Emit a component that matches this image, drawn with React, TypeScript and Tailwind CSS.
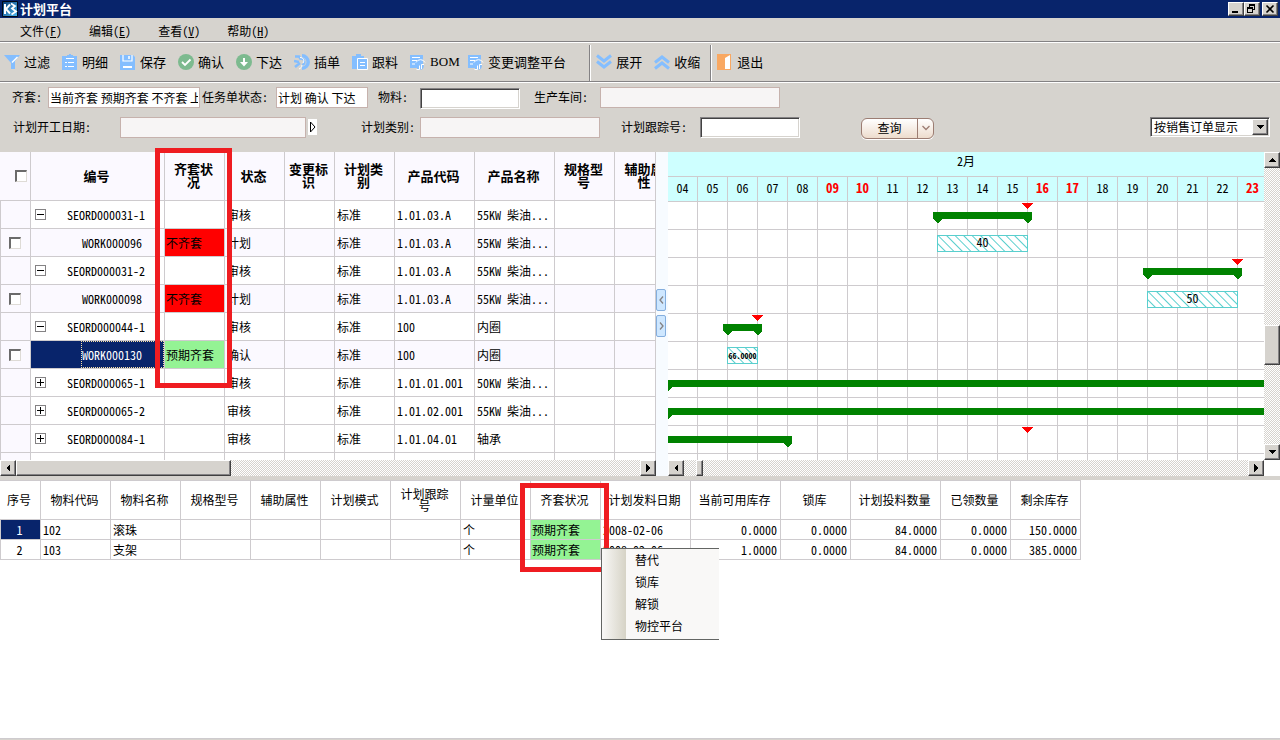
import React from "react";

const RAISED =
  "border border-t-white border-l-white border-r-[#404040] border-b-[#404040] bg-[#d6d3ce] shadow-[inset_-1px_-1px_0_#848284]";
const SUNKEN =
  "border border-t-[#848284] border-l-[#848284] border-r-white border-b-white shadow-[inset_1px_1px_0_#424142,inset_-1px_-1px_0_#d6d3ce]";
const DITHER =
  "bg-[repeating-conic-gradient(#d6d3ce_0_25%,#ffffff_0_50%)] bg-[length:2px_2px]";

/* ---------- icons ---------- */

function Logo() {
  return (
    <svg width="16" height="16" viewBox="0 0 16 16" aria-hidden="true">
      <defs>
        <linearGradient id="logo" x1="0" y1="0" x2="1" y2="1">
          <stop offset="0" stopColor="#0a3c78" />
          <stop offset="1" stopColor="#4db8f0" />
        </linearGradient>
      </defs>
      <rect width="16" height="16" rx="1" fill="#020a18" />
      <rect x="1" y="1" width="14" height="14" fill="url(#logo)" />
      <path d="M3 3v10M8 3.500 4 8l4 4.500" stroke="#fff" strokeWidth="2" fill="none" />
      <path d="M9 2.500 13 5l-3 2.500L14 10.500l-4.500 3" stroke="#fff" strokeWidth="1.800" fill="none" />
    </svg>
  );
}

const BLUE = "#84beff";
const GREEN = "#7dba8f";

function Icon({ name }: { name: string }) {
  return (
    <svg width="16" height="16" viewBox="0 0 16 16" className="shrink-0" aria-hidden="true">
      {name === "filter" && (
        <>
          <path d="M0 1h16l-5 6v8H7V9z" fill={BLUE} />
          <path d="M8 8.500 13.500 3" stroke="#fff" strokeWidth="1.500" />
        </>
      )}
      {name === "detail" && (
        <>
          <path d="M0 2h5V1h2V0h2v1h2v1h4v14H0z" fill={BLUE} />
          <path d="M4 4.500h8M3 8.500h2M6 8.500h6M3 12.500h2M6 12.500h6" stroke="#fff" strokeWidth="1.200" />
        </>
      )}
      {name === "save" && (
        <>
          <path d="M0 1h13l2 2v13H0z" fill={BLUE} />
          <path d="M3 1v6h9V1" fill="none" stroke="#fff" strokeWidth="1.200" />
          <path d="M9 2v3" stroke="#fff" strokeWidth="1.500" />
          <path d="M3 13h9" stroke="#fff" strokeWidth="2" />
        </>
      )}
      {name === "confirm" && (
        <>
          <circle cx="8" cy="8" r="8" fill={GREEN} />
          <path d="m4 8 3 3 5.500-5.500" fill="none" stroke="#fff" strokeWidth="1.800" />
        </>
      )}
      {name === "release" && (
        <>
          <circle cx="8" cy="8" r="8" fill={GREEN} />
          <path d="M8 4v6" stroke="#fff" strokeWidth="2" />
          <path d="M4 8h8l-4 4.500z" fill="#fff" />
        </>
      )}
      {name === "insert" && (
        <>
          <path d="M8 1.800a6.200 6.200 0 0 1 0 12.400" fill="none" stroke={BLUE} strokeWidth="3.500" />
          <path d="M7 5a3 3 0 0 1 1 6" fill="none" stroke={BLUE} strokeWidth="2" />
          <path d="M1 2.500h4l2 3M0 7l5 1M1 13l5-4" fill="none" stroke={BLUE} strokeWidth="2.500" />
          <path d="M6 3.500c3 0 5 2.500 3 5.500M5 15c2-1 3-2 3-4" stroke="#fff" fill="none" />
        </>
      )}
      {name === "follow" && (
        <>
          <path d="M0 2h4V0h5v2h3v13H0z" fill={BLUE} />
          <path d="M5.500 4.500h10v11h-10z" fill={BLUE} stroke="#fff" />
          <path d="M8 8.500h5M8 11.500h5" stroke="#fff" strokeWidth="1.200" />
        </>
      )}
      {name === "bom" && (
        <>
          <path d="M0 1h13v13H0z" fill={BLUE} />
          <path d="M2 3.500h8M2 6.500h5M2 10h3" stroke="#fff" strokeWidth="1.200" />
          <path d="M7 8.500a4 4 0 1 1 5 7h-5z" fill={BLUE} />
          <path d="M6 8.500a5 5 0 0 1 9 0M11.500 15v-4.500H14M6.500 15.500h3v-4" fill="none" stroke="#fff" />
        </>
      )}
      {name === "expand" && (
        <path d="m1 1.500 7 5.500 7-5.500M1 7.500l7 5.500 7-5.500" fill="none" stroke={BLUE} strokeWidth="3" />
      )}
      {name === "collapse" && (
        <path d="m1 8.500 7-5.500 7 5.500M1 14.500 8 9l7 5.500" fill="none" stroke={BLUE} strokeWidth="3" />
      )}
      {name === "exit" && (
        <>
          <path d="M0 0h14v16H0z" fill="#f9a862" />
          <path d="m8 4 5-3v14H8z" fill="#fff" />
        </>
      )}
    </svg>
  );
}

function Arrow({ dir }: { dir: "up" | "down" | "left" | "right" }) {
  const d = {
    up: "M0 6h8L4 2z",
    down: "M0 2h8L4 6z",
    left: "M6 0v8L2 4z",
    right: "M2 0v8l4-4z",
  }[dir];
  return (
    <svg width="8" height="8" viewBox="0 0 8 8" shapeRendering="crispEdges" aria-hidden="true">
      <path d={d} fill="#000" />
    </svg>
  );
}

function ScrollButton({ dir, label }: { dir: "up" | "down" | "left" | "right"; label: string }) {
  return (
    <button aria-label={label} className={`flex size-4 shrink-0 items-center justify-center ${RAISED}`}>
      <Arrow dir={dir} />
    </button>
  );
}

/* ---------- top bars ---------- */

function TitleBar() {
  return (
    <header className="flex h-[18px] items-center bg-[#08246b] pr-0.5 pl-0.5 text-white">
      <Logo />
      <h1 className="ml-0.5 text-[13px] leading-4 font-bold">计划平台</h1>
      <div className="ml-auto flex">
        <button aria-label="最小化" className={`h-[14px] w-4 ${RAISED}`}>
          <svg width="14" height="12" viewBox="0 0 14 12" shapeRendering="crispEdges">
            <path d="M3 8h6v2H3z" />
          </svg>
        </button>
        <button aria-label="还原" className={`h-[14px] w-4 ${RAISED}`}>
          <svg width="14" height="12" viewBox="0 0 14 12" shapeRendering="crispEdges">
            <path d="M4 1h6v6H8V6h1V3H5v1H4zM2 4h6v6H2zM3 6v3h4V6z" fillRule="evenodd" />
          </svg>
        </button>
        <button aria-label="关闭" className={`ml-0.5 h-[14px] w-4 ${RAISED}`}>
          <svg width="14" height="12" viewBox="0 0 14 12">
            <path d="m3.500 2.500 7 7m0-7-7 7" stroke="#000" strokeWidth="1.600" />
          </svg>
        </button>
      </div>
    </header>
  );
}

function MenuBar() {
  const menus = [
    ["文件", "F"],
    ["编辑", "E"],
    ["查看", "V"],
    ["帮助", "H"],
  ];
  return (
    <nav className="flex h-[25px] items-center gap-[27px] border-b border-b-white pt-0.5 pl-5 shadow-[inset_0_-1px_0_#848284]">
      {menus.map(([text, key]) => (
        <button key={key} className="leading-4">
          {text}(<u>{key}</u>)
        </button>
      ))}
    </nav>
  );
}

function Tool({ icon, text }: { icon: string; text: string }) {
  return (
    <button className="flex min-w-[46px] items-center gap-1 text-[13px] leading-4 whitespace-nowrap">
      <Icon name={icon} />
      {text === "BOM" ? <span className="w-[26px] font-['Liberation_Serif',serif]">{text}</span> : text}
    </button>
  );
}

function Divider() {
  return <span className="mt-0.5 h-9 w-0.5 self-start border-l border-l-[#848284] bg-white" />;
}

function ToolBar() {
  return (
    <div className="flex h-10 items-center border-b border-b-white pb-0.5 shadow-[inset_0_-1px_0_#848284]">
      <div className="flex gap-3 pr-[23px] pl-1">
        <Tool icon="filter" text="过滤" />
        <Tool icon="detail" text="明细" />
        <Tool icon="save" text="保存" />
        <Tool icon="confirm" text="确认" />
        <Tool icon="release" text="下达" />
        <Tool icon="insert" text="插单" />
        <Tool icon="follow" text="跟料" />
        <Tool icon="bom" text="BOM" />
        <Tool icon="bom" text="变更调整平台" />
      </div>
      <Divider />
      <div className="flex gap-3 pr-[10px] pl-[5px]">
        <Tool icon="expand" text="展开" />
        <Tool icon="collapse" text="收缩" />
      </div>
      <Divider />
      <div className="pl-[5px]">
        <Tool icon="exit" text="退出" />
      </div>
    </div>
  );
}

/* ---------- filters ---------- */

const FLAT = "h-[21px] border border-[#c6b2ad] px-px font-['Noto_Sans_CJK_SC',sans-serif] outline-none";

function Filters() {
  return (
    <form className="flex h-[69px] flex-col gap-2 pt-[3px]" onSubmit={(e) => e.preventDefault()}>
      <div className="flex h-[22px] items-center">
        <label htmlFor="kit" className="w-12 pl-3">齐套:</label>
        <input id="kit" className={`w-[152px] bg-white ${FLAT}`} defaultValue="当前齐套 预期齐套 不齐套 上" />
        <label htmlFor="state" className="w-[76px] pl-0.5">任务单状态:</label>
        <input id="state" className={`w-[92px] bg-white ${FLAT}`} defaultValue="计划 确认 下达" />
        <label htmlFor="material" className="w-[52px] pl-[10px]">物料:</label>
        <input id="material" className={`mt-[3px] h-[21px] w-[100px] bg-white px-1 ${SUNKEN}`} />
        <label htmlFor="shop" className="w-20 pl-[14px]">生产车间:</label>
        <input id="shop" className={`w-[180px] bg-[#f7f5f5] ${FLAT}`} />
      </div>
      <div className="flex h-[22px] items-center">
        <label htmlFor="start" className="w-[120px] pl-[13px]">计划开工日期:</label>
        <input id="start" className={`w-[186px] bg-[#f7f5f5] ${FLAT}`} />
        <button aria-label="选择日期" className="ml-0.5 flex h-4 w-[9px] items-center justify-center bg-white">
          <svg width="7" height="12" viewBox="0 0 7 12">
            <path d="M1.500 1v10L6 6z" fill="none" stroke="#000" />
          </svg>
        </button>
        <label htmlFor="kind" className="w-[103px] pl-11">计划类别:</label>
        <input id="kind" className={`w-[180px] bg-[#f7f5f5] ${FLAT}`} />
        <label htmlFor="track" className="w-[100px] pl-[21px]">计划跟踪号:</label>
        <input id="track" className={`h-[21px] w-[100px] bg-white px-1 ${SUNKEN}`} />
        <div className="mt-0.5 ml-[61px] flex h-[21px] w-[73px] overflow-hidden rounded-md border border-[#9c7d73] bg-linear-to-b from-white to-[#eddccd] shadow-[0_1px_0_#ffffff]">
          <button className="flex-1">查询</button>
          <button aria-label="更多查询" className="flex w-4 items-center justify-center border-l border-[#9c7d73]">
            <svg width="8" height="6" viewBox="0 0 8 6">
              <path d="m.500 1 3.500 3.500L7.500 1" fill="none" stroke="#9c7d73" strokeWidth="1.300" />
            </svg>
          </button>
        </div>
        <div className={`relative mr-[10px] ml-auto h-5 w-[120px] bg-white ${SUNKEN}`}>
          <select aria-label="显示方式" className="h-full w-full appearance-none pl-[3px] leading-4 outline-none">
            <option>按销售订单显示</option>
          </select>
          <span className={`pointer-events-none absolute top-px right-px flex size-4 items-center justify-center ${RAISED}`}>
            <Arrow dir="down" />
          </span>
        </div>
      </div>
    </form>
  );
}

/* ---------- order table ---------- */

type Order = {
  id: string;
  mark?: "-" | "+";
  kit?: string;
  state: string;
  code: string;
  product: string;
  selected?: boolean;
};

const ORDERS: Order[] = [
  { id: "SEORD000031-1", mark: "-", state: "审核", code: "1.01.03.A", product: "55KW 柴油..." },
  { id: "WORK000096", kit: "不齐套", state: "计划", code: "1.01.03.A", product: "55KW 柴油..." },
  { id: "SEORD000031-2", mark: "-", state: "审核", code: "1.01.03.A", product: "55KW 柴油..." },
  { id: "WORK000098", kit: "不齐套", state: "计划", code: "1.01.03.A", product: "55KW 柴油..." },
  { id: "SEORD000044-1", mark: "-", state: "审核", code: "100", product: "内圈" },
  { id: "WORK000130", kit: "预期齐套", state: "确认", code: "100", product: "内圈", selected: true },
  { id: "SEORD000065-1", mark: "+", state: "审核", code: "1.01.01.001", product: "50KW 柴油..." },
  { id: "SEORD000065-2", mark: "+", state: "审核", code: "1.01.02.001", product: "55KW 柴油..." },
  { id: "SEORD000084-1", mark: "+", state: "审核", code: "1.01.04.01", product: "轴承" },
];

const ORDER_HEADS = [
  "编号",
  "齐套状\n况",
  "状态",
  "变更标\n识",
  "计划类\n别",
  "产品代码",
  "产品名称",
  "规格型\n号",
  "辅助属\n性",
];

function Check({ label }: { label: string }) {
  return (
    <input
      type="checkbox"
      aria-label={label}
      className="block size-3 appearance-none border-t-2 border-r border-b border-l-2 border-t-[#6b6b6b] border-r-[#dedbd6] border-b-[#dedbd6] border-l-[#6b6b6b] bg-white"
    />
  );
}

function Expander({ mark }: { mark: "-" | "+" }) {
  return (
    <button aria-label={mark === "-" ? "折叠" : "展开"} className="block size-[11px]">
      <svg width="11" height="11" viewBox="0 0 11 11" shapeRendering="crispEdges">
        <path d="M.500.500h10v10H.500z" fill="#fff" stroke="#848284" />
        <path d={mark === "-" ? "M2 5h7v1H2z" : "M2 5h3V2h1v3h3v1H6v3H5V6H2z"} />
      </svg>
    </button>
  );
}

const CELL = "border-r border-b border-[#cecbce] p-0";

function OrderTable() {
  return (
    <div className="h-[308px] overflow-hidden border-r border-[#cecbce] bg-white">
      <table className="w-[676px] table-fixed border-separate border-spacing-0">
        <colgroup>
          <col className="w-[31px]" />
          <col className="w-[134px]" />
          <col className="w-[60px]" />
          <col className="w-[60px]" />
          <col className="w-[50px]" />
          <col className="w-[60px]" />
          <col className="w-[80px]" />
          <col className="w-[80px]" />
          <col className="w-[60px]" />
          <col className="w-[61px]" />
        </colgroup>
        <thead>
          <tr className="h-[49px] bg-[#fbf9ff]">
            <th className={`${CELL} pl-[15px]`}>
              <Check label="全选" />
            </th>
            {ORDER_HEADS.map((h) => (
              <th key={h} className={`${CELL} pr-0.5 pb-0.5 text-[13px] leading-[13px] font-bold whitespace-pre`}>
                {h}
              </th>
            ))}
          </tr>
        </thead>
        <tbody>
          {ORDERS.map((o) => (
            <tr key={o.id} className={`h-7 ${o.mark ? "bg-white" : "bg-[#fbf9ff]"}`}>
              <td className={`${CELL} border-l bg-[#fbf9ff] pl-2`}>{!o.mark && <Check label={o.id} />}</td>
              <td className={`${CELL} ${o.selected ? "bg-[#08246b] text-white" : ""}`}>
                <div className="flex h-[27px] items-center">
                  <span className={o.mark ? "w-9 pl-1" : "w-[50px]"}>{o.mark && <Expander mark={o.mark} />}</span>
                  <span
                    className={
                      o.selected
                        ? "flex h-full flex-1 items-center border border-dotted border-[#f7dfa5]"
                        : o.mark
                          ? ""
                          : "pl-px"
                    }
                  >
                    {o.id}
                  </span>
                </div>
              </td>
              <td
                className={`${CELL} pl-px ${o.kit === "不齐套" ? "bg-[#ff0000]" : o.kit ? "bg-[#94f394]" : ""}`}
              >
                {o.kit}
              </td>
              <td className={`${CELL} pl-0.5`}>{o.state}</td>
              <td className={CELL} />
              <td className={`${CELL} pl-0.5`}>标准</td>
              <td className={`${CELL} pl-0.5`}>{o.code}</td>
              <td className={`${CELL} pl-0.5`}>{o.product}</td>
              <td className={CELL} />
              <td className={CELL} />
            </tr>
          ))}
          <tr className="h-7">
            <td className={`${CELL} border-l bg-[#fbf9ff]`} />
            {ORDER_HEADS.map((h) => (
              <td key={h} className={CELL} />
            ))}
          </tr>
        </tbody>
      </table>
    </div>
  );
}

/* ---------- gantt ---------- */

const DAY = 30;
const FIRST_DAY = 4;
const dayX = (d: number) => (d - FIRST_DAY) * DAY - 1;

type Lane = {
  summary?: { from: number; to: number };
  task?: { from: number; to: number; text: string };
  due?: number;
};

const LANES: Lane[] = [
  { summary: { from: 13, to: 16 }, due: 16 },
  { task: { from: 13, to: 16, text: "40" } },
  { summary: { from: 20, to: 23 }, due: 23 },
  { task: { from: 20, to: 23, text: "50" } },
  { summary: { from: 6, to: 7 }, due: 7 },
  { task: { from: 6, to: 7, text: "66.0000" } },
  { summary: { from: 4, to: 40 } },
  { summary: { from: 4, to: 40 } },
  { summary: { from: 2, to: 8 }, due: 16 },
];

function Notch() {
  return (
    <svg width="9" height="4" viewBox="0 0 9 4" shapeRendering="crispEdges" aria-hidden="true">
      <path d="M0 0h9L5 4H4z" fill="#008200" />
    </svg>
  );
}

function Gantt() {
  const days = Array.from({ length: 20 }, (_, i) => i + FIRST_DAY);
  const off = [9, 10, 16, 17, 23];
  return (
    <div className="h-[308px] overflow-hidden bg-white">
      <div className="h-[25px] border-b border-[#cecbce] bg-[#ceffff] pt-px text-center leading-4">2月</div>
      <div className="flex h-[25px] border-b border-[#cecbce] bg-[#ceffff]">
        {days.map((d) => (
          <div
            key={d}
            className={`w-[30px] shrink-0 border-r border-[#cecbce] text-center leading-[22px] ${
              off.includes(d) ? "text-[13px] font-bold text-[#ff0000]" : ""
            }`}
          >
            {String(d).padStart(2, "0")}
          </div>
        ))}
      </div>
      <div className="h-[258px] bg-[repeating-linear-gradient(90deg,transparent_0_29px,#cecbce_29px_30px)]">
        {LANES.map((lane, i) => (
          <div key={i} className="relative h-7 border-b border-[#cecbce]">
            {lane.summary && (
              <div
                className="absolute top-[10px] flex h-[11px] flex-col"
                style={{
                  left: dayX(lane.summary.from) - 4,
                  width: (lane.summary.to - lane.summary.from) * DAY + 9,
                }}
              >
                <div className="h-[7px] bg-[#008200]" />
                <div className="flex justify-between">
                  <Notch />
                  <Notch />
                </div>
              </div>
            )}
            {lane.due && (
              <svg
                className="absolute top-px"
                style={{ left: dayX(lane.due) - 5 }}
                width="11"
                height="6"
                viewBox="0 0 11 6"
                shapeRendering="crispEdges"
                aria-hidden="true"
              >
                <path d="M0 0h11L6 6H5z" fill="#ff0000" />
              </svg>
            )}
            {lane.task && (
              <div
                className={`absolute top-[5px] flex h-[17px] justify-center overflow-hidden border border-[#5acfce] bg-[repeating-linear-gradient(45deg,#ffffff_0_4px,#5acfce_5px,#ffffff_6px)] leading-3 ${
                  lane.task.text.length > 4 ? "items-center text-[8px] font-bold" : ""
                }`}
                style={{ left: dayX(lane.task.from), width: (lane.task.to - lane.task.from) * DAY + 1 }}
              >
                {lane.task.text}
              </div>
            )}
          </div>
        ))}
      </div>
    </div>
  );
}

function Planner() {
  return (
    <section className="relative flex">
      <div className="w-[656px] shrink-0">
        <OrderTable />
        <div className={`flex h-4 ${DITHER}`}>
          <ScrollButton dir="left" label="向左滚动" />
          <div className={`w-[215px] ${RAISED}`} />
          <div className="ml-auto flex">
            <ScrollButton dir="right" label="向右滚动" />
          </div>
        </div>
      </div>
      <div className="flex w-3 shrink-0 flex-col gap-1 bg-[#f7fbff] pt-[137px]">
        <button aria-label="收起左侧" className="flex h-[22px] w-[10px] items-center justify-center rounded-xs border border-[#84aede] bg-[#cee7ff]">
          <svg width="5" height="8" viewBox="0 0 5 8">
            <path d="M4 .500 1 4l3 3.500" fill="none" stroke="#848284" strokeWidth="1.300" />
          </svg>
        </button>
        <button aria-label="收起右侧" className="flex h-[22px] w-[10px] items-center justify-center rounded-xs border border-[#84aede] bg-[#cee7ff]">
          <svg width="5" height="8" viewBox="0 0 5 8">
            <path d="M1 .500 4 4 1 7.500" fill="none" stroke="#848284" strokeWidth="1.300" />
          </svg>
        </button>
      </div>
      <div className="min-w-0 flex-1">
        <Gantt />
        <div className={`flex h-4 ${DITHER}`}>
          <ScrollButton dir="left" label="向左滚动" />
          <div className={`ml-3 w-[7px] ${RAISED}`} />
          <div className="ml-auto flex">
            <ScrollButton dir="right" label="向右滚动" />
          </div>
        </div>
      </div>
      <div className="flex w-4 shrink-0 flex-col bg-white pb-4">
        <div className={`flex flex-1 flex-col ${DITHER}`}>
          <ScrollButton dir="up" label="向上滚动" />
          <div className={`mt-[157px] h-10 ${RAISED}`} />
          <div className="mt-auto flex">
            <ScrollButton dir="down" label="向下滚动" />
          </div>
        </div>
      </div>
      <div className="pointer-events-none absolute -top-1 left-[155px] h-[240px] w-[77px] border-[5px] border-[#ef1c21]" />
    </section>
  );
}

/* ---------- material table ---------- */

const MATERIAL_HEADS = [
  "序号",
  "物料代码",
  "物料名称",
  "规格型号",
  "辅助属性",
  "计划模式",
  "计划跟踪\n号",
  "计量单位",
  "齐套状况",
  "计划发料日期",
  "当前可用库存",
  "锁库",
  "计划投料数量",
  "已领数量",
  "剩余库存",
];

const WIDE_HEADS = ["计划发料日期", "当前可用库存", "计划投料数量"];

const MATERIALS = [
  ["1", "102", "滚珠", "", "", "", "", "个", "预期齐套", "2008-02-06", "0.0000", "0.0000", "84.0000", "0.0000", "150.0000"],
  ["2", "103", "支架", "", "", "", "", "个", "预期齐套", "2008-02-06", "1.0000", "0.0000", "84.0000", "0.0000", "385.0000"],
];

function Materials() {
  return (
    <section className="relative mt-1 mb-px flex-1 border-b border-[#cecbce] bg-white">
      <table className="w-[1081px] table-fixed border-separate border-spacing-0 border-t border-[#cecbce]">
        <colgroup>
          {MATERIAL_HEADS.map((h, i) => (
            <col key={h} className={i === 0 ? "w-[41px]" : WIDE_HEADS.includes(h) ? "w-[90px]" : "w-[70px]"} />
          ))}
        </colgroup>
        <thead>
          <tr className="h-[39px]">
            {MATERIAL_HEADS.map((h) => (
              <th key={h} className={`${CELL} pr-0.5 leading-3 font-normal whitespace-pre`}>
                {h}
              </th>
            ))}
          </tr>
        </thead>
        <tbody>
          {MATERIALS.map((row) => (
            <tr key={row[0]} className="h-5">
              {row.map((v, i) => (
                <td
                  key={i}
                  className={`${CELL} leading-4 ${
                    i === 0
                      ? `border-l pr-0.5 text-center ${v === "1" ? "bg-[#08246b] text-white" : ""}`
                      : i > 9
                        ? "pr-[3px] text-right"
                        : i === 8
                          ? "bg-[#94f394] pl-px"
                          : "pl-0.5"
                  }`}
                >
                  {v}
                </td>
              ))}
            </tr>
          ))}
        </tbody>
      </table>
      <div className="pointer-events-none absolute top-[3px] left-[520px] h-[89px] w-[89px] border-[5px] border-[#ef1c21]" />
      <div
        role="menu"
        className="absolute top-[68px] left-[601px] w-[118px] border border-r-0 border-[#636563] bg-[#f9f8f7] bg-[linear-gradient(90deg,#f9f8f7_0,#d6d3c6_24px,#f9f8f7_24px)] pb-0.5"
      >
        {["替代", "锁库", "解锁", "物控平台"].map((t) => (
          <button key={t} role="menuitem" className="block h-[22px] w-full pl-[33px] text-left">
            {t}
          </button>
        ))}
      </div>
    </section>
  );
}

export default function App() {
  return (
    <div className="flex min-h-screen flex-col overflow-x-hidden bg-[#d6d3ce] font-['Noto_Sans_Mono_CJK_SC','Liberation_Mono','Noto_Sans_CJK_SC',monospace] text-xs text-black">
      <TitleBar />
      <MenuBar />
      <ToolBar />
      <Filters />
      <Planner />
      <Materials />
    </div>
  );
}
